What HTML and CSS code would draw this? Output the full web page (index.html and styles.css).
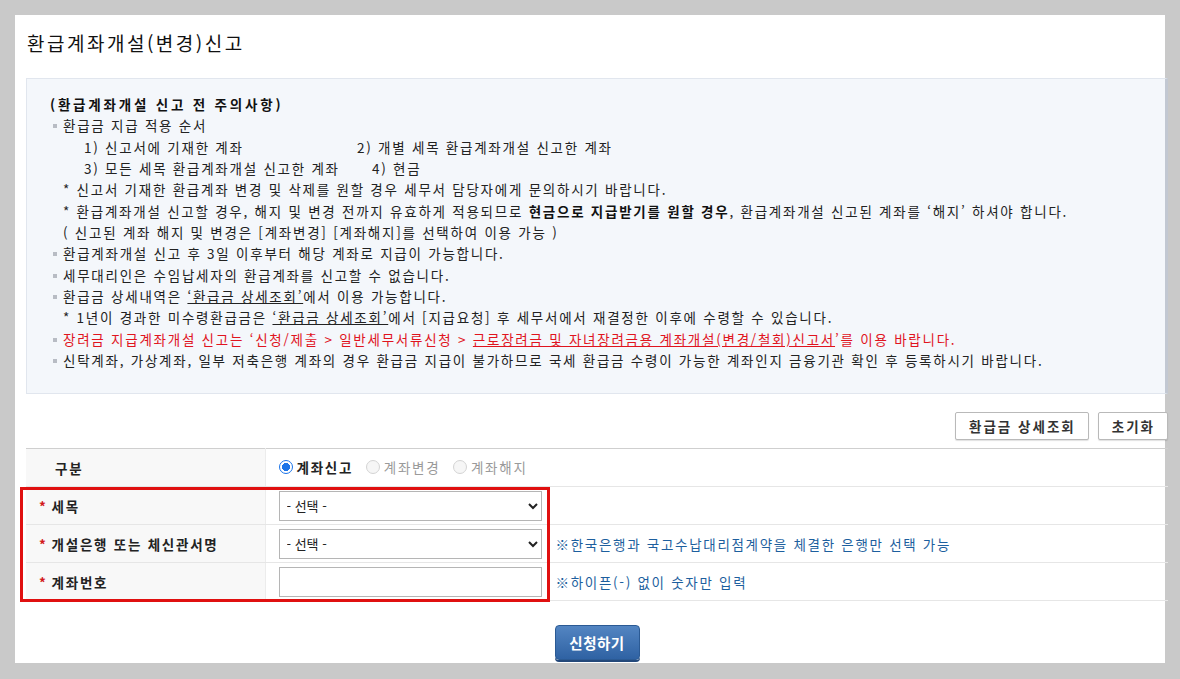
FILE: index.html
```html
<!DOCTYPE html>
<html lang="ko">
<head>
  <meta charset="UTF-8">
  <title>환급계좌개설(변경)신고</title>
  <link rel="stylesheet" href="styles.css">
</head>
<body>
  <div class="panel">
    <h2 class="title">환급계좌개설(변경)신고</h2>

    <!-- 주의사항 -->
    <div class="notice">
      <p class="notice-head">(환급계좌개설 신고 전 주의사항)</p>
      <p class="dot">환급금 지급 적용 순서</p>
      <p class="order"><span class="col1">1) 신고서에 기재한 계좌</span><span>2) 개별 세목 환급계좌개설 신고한 계좌</span></p>
      <p class="order"><span class="col1 short">3) 모든 세목 환급계좌개설 신고한 계좌</span><span>4) 현금</span></p>
      <p class="sub">* 신고서 기재한 환급계좌 변경 및 삭제를 원할 경우 세무서 담당자에게 문의하시기 바랍니다.</p>
      <p class="sub">* 환급계좌개설 신고할 경우, 해지 및 변경 전까지 유효하게 적용되므로 <b>현금으로 지급받기를 원할 경우</b>, 환급계좌개설 신고된 계좌를 ‘해지’ 하셔야 합니다.</p>
      <p class="sub">( 신고된 계좌 해지 및 변경은 [계좌변경] [계좌해지]를 선택하여 이용 가능 )</p>
      <p class="dot">환급계좌개설 신고 후 3일 이후부터 해당 계좌로 지급이 가능합니다.</p>
      <p class="dot">세무대리인은 수임납세자의 환급계좌를 신고할 수 없습니다.</p>
      <p class="dot">환급금 상세내역은 <u>‘환급금 상세조회’</u>에서 이용 가능합니다.</p>
      <p class="sub">* 1년이 경과한 미수령환급금은 <u>‘환급금 상세조회’</u>에서 [지급요청] 후 세무서에서 재결정한 이후에 수령할 수 있습니다.</p>
      <p class="dot red">장려금 지급계좌개설 신고는 ‘신청/제출 &gt; 일반세무서류신청 &gt; <u>근로장려금 및 자녀장려금용 계좌개설(변경/철회)신고서</u>’를 이용 바랍니다.</p>
      <p class="dot">신탁계좌, 가상계좌, 일부 저축은행 계좌의 경우 환급금 지급이 불가하므로 국세 환급금 수령이 가능한 계좌인지 금융기관 확인 후 등록하시기 바랍니다.</p>
    </div>

    <div class="btn-row">
      <button class="btn">환급금 상세조회</button>
      <button class="btn">초기화</button>
    </div>

    <div class="form-wrap">
      <table class="form">
        <tr>
          <th class="plain">구분</th>
          <td>
            <label class="radio on"><span class="mark"></span>계좌신고</label>
            <label class="radio off"><span class="mark"></span>계좌변경</label>
            <label class="radio off"><span class="mark"></span>계좌해지</label>
          </td>
        </tr>
        <tr>
          <th><span class="req">*</span>세목</th>
          <td><select class="field"><option>- 선택 -</option></select></td>
        </tr>
        <tr>
          <th><span class="req">*</span>개설은행 또는 체신관서명</th>
          <td><select class="field"><option>- 선택 -</option></select><span class="help">※한국은행과 국고수납대리점계약을 체결한 은행만 선택 가능</span></td>
        </tr>
        <tr>
          <th><span class="req">*</span>계좌번호</th>
          <td><input class="field" type="text"><span class="help">※하이픈(-) 없이 숫자만 입력</span></td>
        </tr>
      </table>
      <div class="highlight"></div>
    </div>

    <div class="submit-row">
      <button class="submit">신청하기</button>
    </div>
  </div>
</body>
</html>
```

FILE: styles.css
```css
body {
  margin: 0;
  background: #c9c9c9;
  font-family: "Noto Sans CJK KR", "Noto Sans", sans-serif;
  font-size: 13.5px;
  letter-spacing: 1.75px;
  color: #222;
  height: 679px;
  overflow: hidden;
}

.panel {
  margin: 15px 0 0 15px;
  width: 1150px;
  height: 648px;
  background: #fff;
  padding: 0 0 0 11px;
  box-sizing: border-box;
}

.title {
  margin: 0;
  padding: 14px 0 0 1px;
  height: 63px;
  box-sizing: border-box;
  font-size: 19px;
  font-weight: normal;
  letter-spacing: 2.5px;
  color: #111;
}

.notice {
  width: 1142px;
  height: 316px;
  box-sizing: border-box;
  background: #f4f7fb;
  border: 1px solid #e1e6ee;
  border-right: 3px solid #c2c8d2;
  padding: 15px 0 0 23px;
  line-height: 21.35px;
  color: #222;
}

.notice p {
  margin: 0;
  white-space: nowrap;
}

.notice-head {
  font-weight: bold;
  letter-spacing: 2.8px;
  color: #111;
}

.dot {
  position: relative;
  padding-left: 13px;
}

.dot::before {
  content: "";
  position: absolute;
  left: 3px;
  top: 9px;
  width: 4px;
  height: 4px;
  background: #b8bcc4;
}

.order { padding-left: 34px; }
.order .col1 { display: inline-block; width: 273px; }
.order .col1.short { width: 288px; }

.sub { padding-left: 13px; }

.red { color: #e0141e; }

.notice b { font-weight: bold; color: #111; }

.btn-row {
  display: flex;
  justify-content: flex-end;
  gap: 9px;
  width: 1142px;
  padding-top: 18px;
  height: 54px;
  box-sizing: border-box;
}

.btn {
  height: 28px;
  padding: 0 12px 0 13px;
  background: #fff;
  border: 1px solid #b9b9b9;
  border-radius: 2px;
  box-shadow: 0 1px 1px rgba(0, 0, 0, 0.12);
  font-family: inherit;
  font-size: 13.5px;
  font-weight: bold;
  letter-spacing: 2px;
  color: #333;
}

.form-wrap {
  position: relative;
  width: 1142px;
}

.form {
  width: 100%;
  border-collapse: collapse;
  border-top: 1px solid #cfcfcf;
  border-bottom: 1px solid #cfcfcf;
}

.form tr { height: 38px; }

.form th {
  width: 239px;
  box-sizing: border-box;
  text-align: left;
  font-weight: bold;
  color: #222;
  background: #f8f8f8;
  border-bottom: 1px solid #e6e6e6;
  border-right: 1px solid #ececec;
  padding: 0 0 0 13px;
}

.form th.plain { padding-left: 29px; }

.form td {
  border-bottom: 1px solid #e6e6e6;
  padding: 0 0 0 13px;
}

.req {
  color: #d21a1a;
  margin-right: 4px;
}

.radio {
  display: inline-flex;
  align-items: center;
  margin-right: 7px;
}

.radio .mark {
  width: 14px;
  height: 14px;
  border-radius: 50%;
  box-sizing: border-box;
  margin-right: 4px;
}

.radio.on { font-weight: bold; color: #222; }
.radio.on .mark {
  border: 1px solid #1a73e8;
  background: radial-gradient(circle, #1a73e8 0 3.8px, #fff 4.3px);
}

.radio.off { color: #9a9a9a; }
.radio.off .mark { border: 1px solid #d4d4d4; background: #f6f6f6; }

.field {
  width: 263px;
  height: 30px;
  box-sizing: border-box;
  border: 1px solid #b5b5b5;
  background: #fff;
  font-family: inherit;
  font-size: 13px;
  letter-spacing: 0;
  color: #222;
  padding: 0 3px;
  vertical-align: middle;
}

.help {
  margin-left: 14px;
  color: #1d5f9e;
  letter-spacing: 1.7px;
  vertical-align: middle;
}

.highlight {
  position: absolute;
  left: -6px;
  top: 39px;
  width: 530px;
  height: 115px;
  box-sizing: border-box;
  border: 3px solid #e01010;
  pointer-events: none;
}

.submit-row {
  display: flex;
  justify-content: center;
  width: 1142px;
  padding-top: 24px;
}

.submit {
  width: 85px;
  height: 35px;
  border: 1px solid #2b5a94;
  border-radius: 4px;
  background: linear-gradient(#5385c2, #2f62a3);
  box-shadow: 0 2px 0 #23487a;
  color: #fff;
  font-family: inherit;
  font-size: 14.5px;
  font-weight: bold;
  letter-spacing: 0.5px;
}
```
